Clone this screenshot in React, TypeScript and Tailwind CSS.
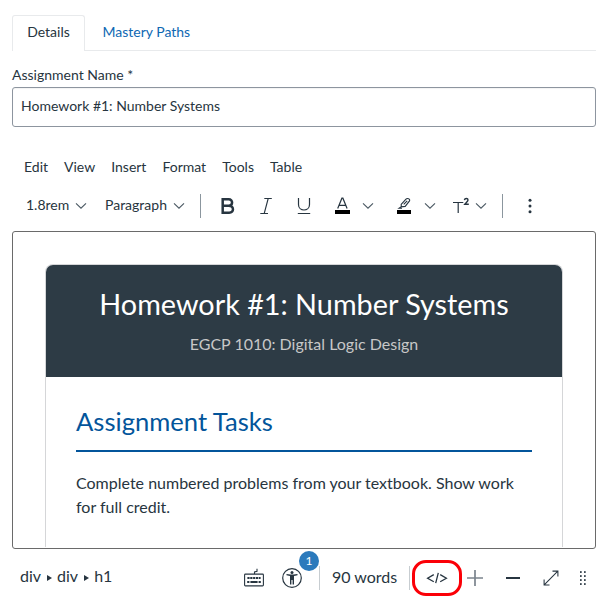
import type { ReactNode } from "react";

function Chevron({ className = "" }: { className?: string }) {
  return (
    <svg className={`block shrink-0 ${className}`} width="12" height="8" viewBox="0 0 12 8" fill="none" stroke="#4b5963" strokeWidth="1.1">
      <path d="M1 1.3 6 6.2 11 1.3" />
    </svg>
  );
}

function Cell({ className, children }: { className: string; children: ReactNode }) {
  return <div className={`flex h-8 shrink-0 items-center ${className}`}>{children}</div>;
}

const ink = "#273540";

function Toolbar() {
  return (
    <div className="mt-[13px] flex h-8 items-center pl-[14px] text-sm">
      <Cell className="w-[49px] pb-[2px]">1.8rem</Cell>
      <Cell className="w-[30px]"><Chevron /></Cell>
      <Cell className="w-[68px] pb-[2px]">Paragraph</Cell>
      <Cell className="w-[27px]"><Chevron /></Cell>
      <div className="h-6 w-px bg-[#8b969e]" />
      <Cell className="ml-5 w-[39px]">
        <svg width="14" height="18" viewBox="0 0 14 18" fill="none" stroke={ink} strokeWidth="2.5">
          <path d="M1.7 2.3H7.7C12.3 2.3 12.1 8.7 7.7 8.7H1.7M7.7 8.7C13.3 8.7 13.3 15.7 8.2 15.7H1.7V1" />
        </svg>
      </Cell>
      <Cell className="w-[37px]">
        <svg width="13" height="18" viewBox="0 0 13 18" fill="none" stroke={ink} strokeWidth="1.1">
          <path d="M4.3 1.5H11.8M.3 16.5H8M8.2 1.5 4.2 16.5" />
        </svg>
      </Cell>
      <Cell className="w-[38px]">
        <svg width="14" height="18" viewBox="0 0 14 18" fill="none" stroke={ink} strokeWidth="1.2">
          <path d="M1.5 1V7.5C1.5 14.8 12.5 14.8 12.5 7.5V1M.8 16.5H13.2" />
        </svg>
      </Cell>
      <Cell className="w-[27px]">
        <svg width="15" height="18" viewBox="0 0 15 18" fill="none" stroke={ink} strokeWidth="1.2">
          <path d="M2.7 11.5 6.9 1.2H7.9L12.1 11.5M4.2 8.3H10.6" />
          <path d="M0 13H15V17H0Z" fill="#000" stroke="none" />
        </svg>
      </Cell>
      <Cell className="w-[35px]"><Chevron /></Cell>
      <Cell className="w-[27px]">
        <svg width="15" height="18" viewBox="0 0 15 18" fill="none" stroke={ink} strokeWidth="1.1">
          <path d="M4.2 7.4 9 2.1C10.2.8 13.5 1.8 12.5 3.9L8.2 9.4 4.3 9.8ZM6.7 7.3 10.2 3.8M4.3 9.6 2 11.3H5" />
          <path d="M0 13H14V17H0Z" fill="#000" stroke="none" />
        </svg>
      </Cell>
      <Cell className="w-[29px]"><Chevron /></Cell>
      <Cell className="w-[22px]">
        <svg width="17" height="18" viewBox="0 0 17 18" fill="none" stroke={ink}>
          <path d="M0 5.5H10.3M5.2 5.5V16" strokeWidth="1.2" />
          <path d="M11.4 3.1C11.8 .9 15 1 15 3.1C15 4.5 12.8 5.8 11.7 7.3H15.8" strokeWidth="1.4" />
        </svg>
      </Cell>
      <Cell className="w-[27px]"><Chevron /></Cell>
      <div className="h-6 w-px bg-[#8b969e]" />
      <Cell className="ml-[25px]">
        <svg width="4" height="18" viewBox="0 0 4 18" fill={ink}>
          <circle cx="2" cy="3.3" r="1.5" /><circle cx="2" cy="9" r="1.5" /><circle cx="2" cy="14.7" r="1.5" />
        </svg>
      </Cell>
    </div>
  );
}

function Arrow() {
  return (
    <svg className="ml-[6px] mr-[5px] mt-[3px]" width="5" height="6" viewBox="0 0 5 6" fill={ink}>
      <path d="M0 0 5 3 0 6Z" />
    </svg>
  );
}

function StatusBar() {
  return (
    <div className="flex h-[52px] items-center pl-2 pt-[6px] text-base">
      <div className="flex w-[224px] items-center pb-[4px]">
        <span>div</span><Arrow /><span>div</span><Arrow /><span>h1</span>
      </div>
      <svg className="shrink-0" width="20" height="20" viewBox="0 0 20 20" fill="none" stroke={ink} strokeWidth="1.1">
        <rect x=".6" y="6.1" width="18.8" height="11.8" rx=".8" />
        <path d="M10.5 6V3.9L13 3.3V.8" />
        <path d="M3.4 10H16.6" strokeWidth="2" strokeDasharray="2.2 .65" />
        <path d="M3.2 14H5.4M6.4 14H13.6M14.6 14H16.8" strokeWidth="2" />
      </svg>
      <div className="relative ml-[18px] h-5 w-5 shrink-0">
        <svg width="20" height="20" viewBox="0 0 20 20">
          <circle cx="10" cy="10" r="9.3" fill="none" stroke={ink} strokeWidth="1.2" />
          <circle cx="10" cy="4.4" r="1.5" fill={ink} />
          <path d="M4.5 6 8.5 6.5H11.5L15.5 6V7.3L12 8V16.5H10.6V12H9.4V16.5H8V8L4.5 7.3Z" fill={ink} />
        </svg>
        <span className="absolute -top-[17px] left-[17px] flex h-5 w-5 items-center justify-center rounded-full bg-[#2b7abc] text-xs text-white">1</span>
      </div>
      <div className="ml-[17px] h-6 w-px shrink-0 bg-[#c7cdd1]" />
      <span className="ml-3 w-[77px] shrink-0 whitespace-nowrap pb-[2px]">90 words</span>
      <div className="h-6 w-px shrink-0 bg-[#c7cdd1]" />
      <div className="ml-[2px] flex h-9 w-[50px] shrink-0 items-center justify-center rounded-[14px] border-3 border-[#fb0007]">
        <svg width="22" height="14" viewBox="0 0 22 14" fill="none" stroke={ink} strokeWidth="1.3">
          <path d="M7.8 3.6 1.6 7.2 7.8 10.8M14.2 3.6 20.4 7.2 14.2 10.8M12.3 1.8 9.7 12.2" />
        </svg>
      </div>
      <svg className="ml-[5px] shrink-0" width="16" height="16" viewBox="0 0 16 16" stroke="#7b848d" strokeWidth="1.7">
        <path d="M0 8H16M8 0V16" />
      </svg>
      <svg className="ml-[23px] shrink-0" width="14" height="16" viewBox="0 0 14 16" stroke={ink} strokeWidth="2">
        <path d="M0 8H14" />
      </svg>
      <svg className="ml-[23px] shrink-0" width="16" height="16" viewBox="0 0 16 16" fill="none" stroke={ink} strokeWidth="1.05">
        <path d="M1.2 14.8 14.8 1.2M9.5 1.1H14.9V6.5M1.1 9.5V14.9H6.5" />
      </svg>
      <svg className="ml-[21px] shrink-0" width="7" height="16" viewBox="0 0 7 16" fill={ink}>
        {[1.2, 5.2, 9.2, 13.2].map((y) => (
          <g key={y}><rect x="0" y={y} width="1.7" height="1.7" /><rect x="4" y={y} width="1.7" height="1.7" /></g>
        ))}
      </svg>
    </div>
  );
}

export default function App() {
  return (
    <div className="h-[601px] overflow-hidden bg-white px-3 font-['Lato',sans-serif] text-[#273540]">
      <div className="flex h-[51px] items-stretch pt-[15px] text-sm">
        <div className="flex w-[73px] items-center justify-center rounded-t-[3px] border border-b-0 border-[#e8eaec] pb-[3px]">Details</div>
        <div className="flex flex-1 items-center border-b border-[#e8eaec] pb-[2px] pl-[17.5px] text-[#0e68b3]">Mastery Paths</div>
      </div>
      <label className="mt-[13px] block h-[23px] text-sm leading-[21px]">Assignment Name *</label>
      <div className="flex h-10 items-center rounded-[3px] border border-[#8d959f] px-2 pb-[2px] text-sm shadow-[inset_0_1px_1px_rgba(0,0,0,0.05)]">Homework #1: Number Systems</div>
      <div className="mt-[30px] flex h-5 items-center gap-4 pl-3 text-sm">
        {["Edit", "View", "Insert", "Format", "Tools", "Table"].map((m) => <span key={m}>{m}</span>)}
      </div>
      <Toolbar />
      <div className="mt-[9px] h-[318px] overflow-hidden rounded-[3px] border border-[#6a6a6a] px-8 pb-px pt-8">
        <div className="h-[283px] overflow-hidden rounded-t-lg border border-b-0 border-[#d5d6d8]">
          <header className="h-28 bg-[#2d3b45] pt-[19px] text-center">
            <h1 className="text-[28.8px] leading-10 text-white">Homework #1: Number Systems</h1>
            <p className="mt-2 text-base leading-6 text-[#c7c7c7]">EGCP 1010: Digital Logic Design</p>
          </header>
          <section className="px-[30px] pt-[26px]">
            <h2 className="h-[49px] border-b-2 border-[#03559b] text-[25.6px] leading-9 text-[#03559b]">Assignment Tasks</h2>
            <p className="mt-[19px] text-base leading-6">Complete numbered problems from your textbook. Show work for full credit.</p>
          </section>
        </div>
      </div>
      <StatusBar />
    </div>
  );
}
